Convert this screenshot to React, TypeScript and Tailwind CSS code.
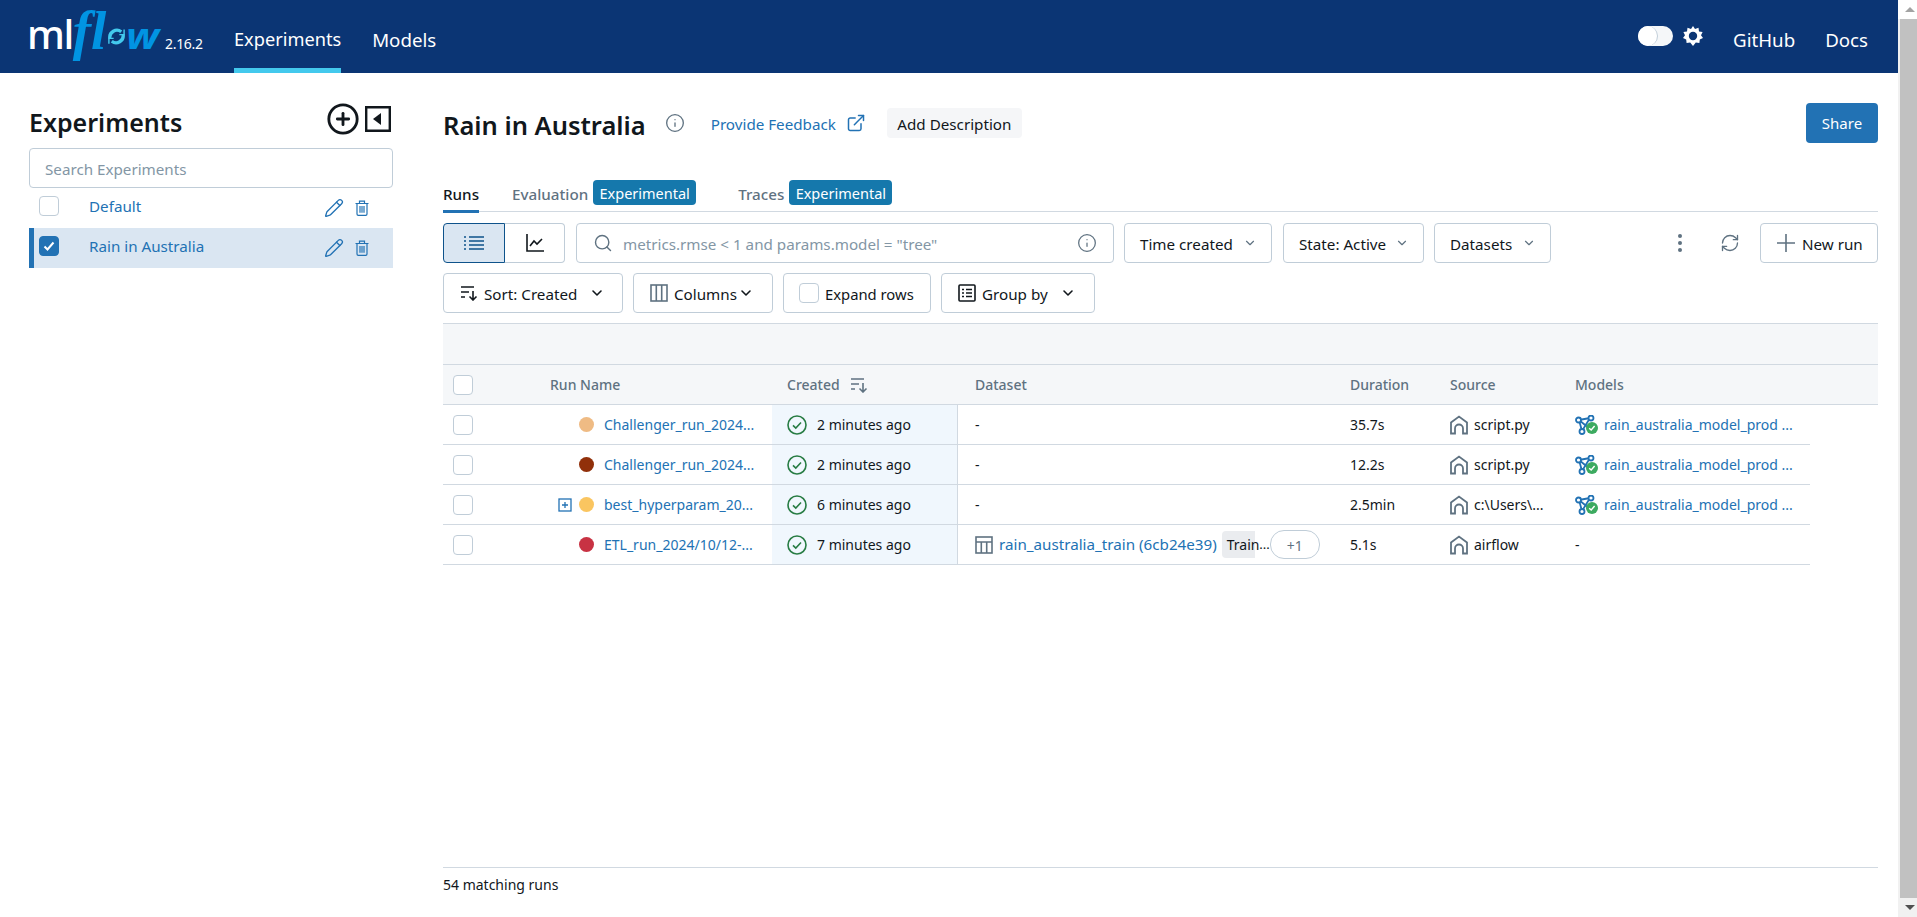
import { ChevronDown, CirclePlus, ExternalLink, Info, Pencil, RefreshCw, Search } from 'lucide-react'
import type { ReactNode } from 'react'

const font = { fontFamily: '"Noto Sans", sans-serif' }

const gridCols = 'grid grid-cols-[329px_186px_377px_100px_125px_250px]'

function Checkbox({ checked = false, className = '' }: { checked?: boolean; className?: string }) {
  return (
    <span
      className={`flex h-5 w-5 shrink-0 items-center justify-center rounded-[4px] border ${checked ? 'border-[#2272b4] bg-[#2272b4]' : 'border-[#c0cdd8] bg-white'} ${className}`}
    >
      {checked && (
        <svg viewBox="0 0 12 12" className="h-3 w-3" fill="none" stroke="white" strokeWidth="2">
          <path d="M1.5 6.5 4.5 9.5 10.5 2.5" />
        </svg>
      )}
    </span>
  )
}

function SortIcon({ className = '' }: { className?: string }) {
  return (
    <svg viewBox="0 0 18 16" className={className} fill="none" stroke="currentColor" strokeWidth="1.6">
      <path d="M1 2h13M1 7h8M1 12h4M13 6v9M9.5 11.5 13 15l3.5-3.5" />
    </svg>
  )
}

function ColumnsIcon() {
  return (
    <svg viewBox="0 0 18 18" className="h-[18px] w-[18px] text-[#5f7281]" fill="none" stroke="currentColor" strokeWidth="1.6">
      <rect x="1" y="1" width="16" height="16" />
      <path d="M6.3 1v16M11.7 1v16" />
    </svg>
  )
}

function GroupIcon() {
  return (
    <svg viewBox="0 0 18 18" className="h-[18px] w-[18px] text-[#11171c]" fill="none" stroke="currentColor" strokeWidth="1.6">
      <rect x="1" y="1" width="16" height="16" rx="1" />
      <path d="M4 5.5h2M8 5.5h6M4 9h2M8 9h6M4 12.5h2M8 12.5h6" />
    </svg>
  )
}

function TrashIcon() {
  return (
    <svg viewBox="0 0 14 16" className="ml-[11px] mr-[24px] h-4 w-[14px] text-[#2272b4]" fill="none" stroke="currentColor" strokeWidth="1.2">
      <path d="M0.5 3.5h13M4.5 3.5V1.2h5v2.3M2 3.5v10.5a1.3 1.3 0 0 0 1.3 1.3h7.4a1.3 1.3 0 0 0 1.3-1.3V3.5M5 6v6.8M7 6v6.8M9 6v6.8" />
    </svg>
  )
}

function SourceIcon() {
  return (
    <svg viewBox="0 0 18 20" className="h-5 w-[18px] shrink-0 text-[#5f7281]" fill="none" stroke="currentColor" strokeWidth="1.8">
      <path d="M1 18.5V7.5L9 1.5l8 6v11h-4v-5a4 4 0 0 0-8 0v5z" />
    </svg>
  )
}

function ModelIcon() {
  return (
    <svg viewBox="0 0 24 20" className="h-5 w-6 shrink-0" fill="none">
      <g stroke="#2272b4" strokeWidth="1.8">
        <path d="M4 5 15 3M4 5l3 11M4 5l11 9M15 3l-8 13" />
        <circle cx="3.5" cy="5" r="2.5" fill="white" />
        <circle cx="16" cy="3" r="2.5" fill="white" />
        <circle cx="7" cy="16.5" r="2.5" fill="white" />
      </g>
      <circle cx="17" cy="13" r="6" fill="#3caa60" />
      <path d="M14.2 13.2 16.2 15l3.4-4" stroke="white" strokeWidth="1.4" />
    </svg>
  )
}

function StatusIcon() {
  return (
    <svg viewBox="0 0 20 20" className="h-5 w-5 shrink-0" fill="none" stroke="#277c43" strokeWidth="1.6">
      <circle cx="10" cy="10" r="9" />
      <path d="M6 10.3 8.8 13 14 7.5" />
    </svg>
  )
}

function Button({ children, className = '' }: { children: ReactNode; className?: string }) {
  return (
    <div className={`flex h-10 shrink-0 items-center rounded-[4px] border border-[#c0cdd8] bg-white text-[15.2px] text-[#11171c] ${className}`}>
      {children}
    </div>
  )
}

function Logo() {
  return (
    <div className="flex h-[73px] items-center pl-[27px]">
      <div className="mb-[12px] flex w-[138px] items-baseline leading-none">
        <span className="text-[40px] font-medium tracking-[-1.5px] text-white">ml</span>
        <span
          className="text-[55px] font-bold italic leading-none text-[#0194e2]"
          style={{ fontFamily: '"Liberation Serif", serif' }}
        >
          fl
        </span>
        <svg viewBox="0 0 20 20" className="mb-[12px] ml-[1px] h-[19px] w-[19px] self-end" fill="none" stroke="#43c9ed" strokeWidth="3.5">
          <path d="M3 12a7.5 7.5 0 0 1 12-7M17 8a7.5 7.5 0 0 1-12 7" />
          <path d="M13 8h5V2.5M7 12H2v5.5" strokeWidth="1.5" />
        </svg>
        <span className="inline-block origin-left scale-x-[1.2] text-[35px] font-bold italic leading-none text-[#0194e2]">w</span>
      </div>
    </div>
  )
}

function Header() {
  return (
    <div className="flex h-[73px] items-center bg-[#0b3574] text-white">
      <Logo />
      <span className="mt-[14px] w-[69px] text-[14px] tracking-[-0.3px]">2.16.2</span>
      <div className="relative flex h-[73px] items-center">
        <span className="mt-[7px] text-[18.2px]">Experiments</span>
        <span className="absolute bottom-0 left-0 h-[5px] w-full bg-[#43c9ed]" />
      </div>
      <span className="ml-[31px] mt-[7px] text-[18.7px]">Models</span>
      <div className="ml-auto flex items-center">
        <div className="relative h-5 w-[35px] rounded-full bg-[#f5f7f9]">
          <span className="absolute left-0 top-0 h-5 w-5 rounded-full border-r border-[#c0cdd8] bg-white" />
        </div>
        <svg viewBox="0 0 20 20" className="ml-[10px] h-5 w-5" fill="white">
          <path d="M10 0 12 3 15.5 1.8 16 5.4 19.6 6 18 9.2 20 12l-3.2 1.4-.4 3.6-3.6-.4L10 20l-2.8-3.4-3.6.4-.4-3.6L0 12l2-2.8L.4 6 4 5.4l.5-3.6L8 3z" />
          <circle cx="10" cy="10" r="4.2" fill="#0b3574" />
        </svg>
        <span className="ml-[30px] mt-[7px] text-[18.7px]">GitHub</span>
        <span className="ml-[30px] mr-[30px] mt-[7px] text-[18.7px]">Docs</span>
      </div>
    </div>
  )
}

function SidebarRow({ name, active = false }: { name: string; active?: boolean }) {
  return (
    <div className={`flex h-10 items-center border-l-[5px] ${active ? 'border-[#2272b4] bg-[#dae6f2]' : 'border-transparent'}`}>
      <Checkbox checked={active} className="ml-[5px] mt-[-5px]" />
      <span className="ml-[30px] mt-[-3px] text-[15.2px] text-[#2272b4]">{name}</span>
      <Pencil className="ml-auto h-5 w-5 text-[#2272b4]" strokeWidth={1.6} />
      <TrashIcon />
    </div>
  )
}

function Sidebar() {
  return (
    <div className="ml-[29px] w-[364px] shrink-0">
      <div className="flex h-[75px] items-start">
        <span className="mt-[31px] text-[25px] font-semibold leading-[36px] text-[#11171c]">Experiments</span>
        <CirclePlus className="ml-auto mt-[29px] h-[34px] w-[34px] text-[#11171c]" strokeWidth={2} />
        <svg viewBox="0 0 26 26" className="ml-[5px] mr-[2px] mt-[33px] h-[26px] w-[26px]" fill="#11171c">
          <path fill="none" stroke="#11171c" strokeWidth="2.4" d="M1.2 1.2h23.6v23.6H1.2z" />
          <path d="M16 7v12l-8-6z" />
        </svg>
      </div>
      <div className="flex h-10 items-center rounded-[4px] border border-[#c0cdd8] pl-[15px] text-[15.2px] text-[#8396a5]">
        <span className="mt-[2px]">Search Experiments</span>
      </div>
      <SidebarRow name="Default" />
      <SidebarRow name="Rain in Australia" active />
    </div>
  )
}

function Badge() {
  return <span className="flex h-[25px] w-[103px] items-center justify-center rounded-[4px] bg-[#1578ac] pt-[2px] text-[14.5px] text-white">Experimental</span>
}

function Tabs() {
  return (
    <div className="mt-[37px] flex h-[32px] items-start border-b border-[#d1d9e1] text-[15.2px]">
      <div className="relative h-[32px] w-[36px] pt-[3px] font-medium text-[#11171c]">
        Runs
        <span className="absolute bottom-[-1px] left-0 h-[3px] w-full bg-[#2272b4]" />
      </div>
      <span className="ml-[33px] pt-[3px] font-medium text-[#5f7281]">Evaluation</span>
      <span className="ml-[5px]"><Badge /></span>
      <span className="ml-[42px] pt-[3px] font-medium text-[#5f7281]">Traces</span>
      <span className="ml-[5px]"><Badge /></span>
    </div>
  )
}

function Toolbar() {
  return (
    <>
      <div className="mt-[11px] flex h-10 items-center">
        <div className="flex h-10 items-center justify-center">
          <div className="flex h-10 w-[62px] items-center justify-center rounded-l-[4px] border border-[#0e538b] bg-[#dae6f2]">
            <svg viewBox="0 0 20 16" className="h-4 w-5" fill="none" stroke="#0e538b" strokeWidth="1.6">
              <path d="M5 2h15M5 6h15M5 10h15M5 14h15M0 2h2M0 6h2M0 10h2M0 14h2" />
            </svg>
          </div>
          <div className="flex h-10 w-[60px] items-center justify-center rounded-r-[4px] border border-l-0 border-[#c0cdd8]">
            <svg viewBox="0 0 18 18" className="h-[18px] w-[18px]" fill="none" stroke="#11171c" strokeWidth="1.6">
              <path d="M1 0v17h17M4 12l4-5 3 3 5-5" />
            </svg>
          </div>
        </div>
        <div className="ml-[11px] flex h-10 w-[538px] items-center rounded-[4px] border border-[#c0cdd8] pl-[16px] text-[15.2px] text-[#8396a5]">
          <Search className="h-5 w-5 text-[#5f7281]" strokeWidth={1.7} />
          <span className="ml-[10px] mt-[2px]">metrics.rmse &lt; 1 and params.model = "tree"</span>
          <Info className="ml-auto mr-[16px] h-5 w-5 text-[#5f7281]" strokeWidth={1.5} />
        </div>
        <Button className="ml-[10px] w-[148px] justify-between pl-[15px] pr-[14px]">
          <span className="mt-[2px]">Time created</span> <ChevronDown className="h-[14px] w-[14px] text-[#5f7281]" />
        </Button>
        <Button className="ml-[11px] w-[141px] justify-between pl-[15px] pr-[14px]">
          <span className="mt-[2px]">State: Active</span> <ChevronDown className="h-[14px] w-[14px] text-[#5f7281]" />
        </Button>
        <Button className="ml-[10px] w-[117px] justify-between pl-[15px] pr-[14px]">
          <span className="mt-[2px]">Datasets</span> <ChevronDown className="h-[14px] w-[14px] text-[#5f7281]" />
        </Button>
        <svg viewBox="0 0 4 20" className="ml-[127px] h-5 w-1" fill="#5f7281">
          <circle cx="2" cy="3" r="2" />
          <circle cx="2" cy="10" r="2" />
          <circle cx="2" cy="17" r="2" />
        </svg>
        <RefreshCw className="ml-[38px] h-5 w-5 text-[#5f7281]" strokeWidth={1.6} />
        <Button className="ml-[20px] w-[118px] pl-[16px]">
          <svg viewBox="0 0 18 18" className="h-[18px] w-[18px] text-[#5f7281]" fill="none" stroke="currentColor" strokeWidth="1.6">
            <path d="M9 0v18M0 9h18" />
          </svg>
          <span className="ml-[7px] mt-[2px]">New run</span>
        </Button>
      </div>
      <div className="mt-[10px] flex h-10 gap-[10px]">
        <Button className="w-[180px] pl-[16px]">
          <SortIcon className="h-4 w-[18px] text-[#11171c]" />
          <span className="ml-[6px] mt-[2px]">Sort: Created</span>
          <ChevronDown className="ml-[12px] h-4 w-4" strokeWidth={2.4} />
        </Button>
        <Button className="w-[140px] pl-[16px]">
          <ColumnsIcon />
          <span className="ml-[6px] mt-[2px]">Columns</span>
          <ChevronDown className="ml-[1px] h-4 w-4" strokeWidth={2.4} />
        </Button>
        <Button className="w-[148px] pl-[15px]">
          <Checkbox />
          <span className="ml-[6px] mt-[2px] text-[14.8px]">Expand rows</span>
        </Button>
        <Button className="w-[154px] pl-[16px]">
          <GroupIcon />
          <span className="ml-[6px] mt-[2px]">Group by</span>
          <ChevronDown className="ml-[12px] h-4 w-4" strokeWidth={2.4} />
        </Button>
      </div>
    </>
  )
}

const runs = [
  { color: '#efbb84', name: 'Challenger_run_2024...', ago: '2 minutes ago', duration: '35.7s', source: 'script.py', model: true },
  { color: '#91300a', name: 'Challenger_run_2024...', ago: '2 minutes ago', duration: '12.2s', source: 'script.py', model: true },
  { color: '#fac560', name: 'best_hyperparam_20...', ago: '6 minutes ago', duration: '2.5min', source: 'c:\\Users\\...', model: true, expand: true },
  { color: '#c83243', name: 'ETL_run_2024/10/12-...', ago: '7 minutes ago', duration: '5.1s', source: 'airflow', model: false, dataset: true },
]

function RunsTable() {
  return (
    <>
      <div className="mt-[10px] h-[42px] border-y border-[#d1d9e1] bg-[#f5f7f9]" />
      <div className="flex h-10 items-center border-b border-[#d1d9e1] bg-[#f5f7f9] text-[14px] font-medium text-[#5f7281]">
        <div className={gridCols}>
          <div className="flex items-center pl-[10px]">
            <Checkbox className="bg-transparent" />
            <span className="ml-[77px]">Run Name</span>
          </div>
          <div className="flex items-center pl-[15px]">
            Created
            <SortIcon className="ml-[10px] h-4 w-[18px]" />
          </div>
          <div className="pl-[17px]">Dataset</div>
          <div className="pl-[15px]">Duration</div>
          <div className="pl-[15px]">Source</div>
          <div className="pl-[15px]">Models</div>
        </div>
      </div>
      {runs.map((run, i) => (
        <div key={i} className={`${gridCols} h-10 w-[1367px] border-b border-[#d1d9e1] text-[14px] text-[#11171c]`}>
          <div className="flex items-center pl-[10px]">
            <Checkbox />
            <div className="ml-[84px] flex w-[15px] justify-center">
              {run.expand && (
                <svg viewBox="0 0 14 14" className="h-[14px] w-[14px]" fill="none" stroke="#2272b4" strokeWidth="1.3">
                  <rect x="1" y="1" width="12" height="12" />
                  <path d="M4 7h6M7 4v6" />
                </svg>
              )}
            </div>
            <span className="ml-[7px] h-[15px] w-[15px] rounded-full" style={{ backgroundColor: run.color }} />
            <span className="ml-[10px] whitespace-nowrap text-[#2272b4]">{run.name}</span>
          </div>
          <div className="flex items-center border-r border-[#d1d9e1] bg-[#f0f7fd] pl-[15px]">
            <StatusIcon />
            <span className="ml-[10px]">{run.ago}</span>
          </div>
          <div className="flex items-center whitespace-nowrap pl-[17px]">
            {run.dataset ? (
              <>
                <svg viewBox="0 0 18 18" className="h-[18px] w-[18px] shrink-0 text-[#5f7281]" fill="none" stroke="currentColor" strokeWidth="1.6">
                  <rect x="1" y="1" width="16" height="16" />
                  <path d="M1 6h16M6.3 6v11M11.7 6v11" />
                </svg>
                <span className="ml-[6px] text-[15.2px] text-[#2272b4]">rain_australia_train (6cb24e39)</span>
                <span className="ml-[5px] flex h-[27px] w-[33px] items-center rounded-l-[4px] bg-[#eaecef] pl-[5px] text-[14px]">Train</span>
                <span className="w-[15px] text-right text-[13px]">...</span>
                <span className="flex h-[29px] w-[50px] items-center justify-center rounded-[14px] border border-[#c0cdd8] pt-[2px] text-[#5f7281]">+1</span>
              </>
            ) : (
              '-'
            )}
          </div>
          <div className="flex items-center pl-[15px]">{run.duration}</div>
          <div className="flex items-center pl-[15px]">
            <SourceIcon />
            <span className="ml-[6px] whitespace-nowrap">{run.source}</span>
          </div>
          <div className="flex items-center whitespace-nowrap pl-[15px] text-[#2272b4]">
            {run.model ? (
              <>
                <ModelIcon />
                <span className="ml-[5px]">rain_australia_model_prod ...</span>
              </>
            ) : (
              <span className="text-[#11171c]">-</span>
            )}
          </div>
        </div>
      ))}
    </>
  )
}

function Scrollbar() {
  return (
    <div className="flex h-[917px] w-[19px] shrink-0 flex-col bg-[#f1f1f1]">
      <div className="flex h-[19px] items-center justify-center bg-white">
        <span className="ml-[4px] h-0 w-0 border-x-[5px] border-b-[5px] border-x-transparent border-b-[#a3a3a3]" />
      </div>
      <div className="ml-[2px] flex-1 bg-[#c1c1c1]" />
      <div className="flex h-[19px] items-center justify-center">
        <span className="ml-[4px] h-0 w-0 border-x-[5px] border-t-[5px] border-x-transparent border-t-[#505050]" />
      </div>
    </div>
  )
}

export default function App() {
  return (
    <div className="flex h-[917px] w-[1917px] overflow-hidden bg-white" style={font}>
      <div className="flex min-w-0 flex-1 flex-col">
        <Header />
        <div className="flex flex-1">
          <Sidebar />
          <div className="ml-[50px] flex w-[1435px] flex-col">
            <div className="mt-[30px] flex h-10 items-center">
              <span className="mt-[5px] text-[25.5px] font-semibold text-[#11171c]">Rain in Australia</span>
              <Info className="ml-[19px] h-5 w-5 text-[#5f7281]" strokeWidth={1.6} />
              <span className="ml-[26px] mt-[2px] text-[15.2px] text-[#2272b4]">Provide Feedback</span>
              <ExternalLink className="ml-[10px] h-[20px] w-[20px] text-[#2272b4]" strokeWidth={1.8} />
              <span className="ml-[21px] flex h-[30px] w-[135px] items-center justify-center rounded-[4px] bg-[#f5f6f8] pt-[2px] text-[15.2px] text-[#11171c]">Add Description</span>
              <span className="ml-auto flex h-10 w-[72px] items-center justify-center rounded-[4px] bg-[#2272b4] text-[15px] text-white">Share</span>
            </div>
            <Tabs />
            <Toolbar />
            <RunsTable />
            <div className="mb-[21px] mt-auto border-t border-[#d1d9e1] pt-[6px] text-[14px] leading-[22px] text-[#11171c]">
              54 matching runs
            </div>
          </div>
        </div>
      </div>
      <Scrollbar />
    </div>
  )
}
